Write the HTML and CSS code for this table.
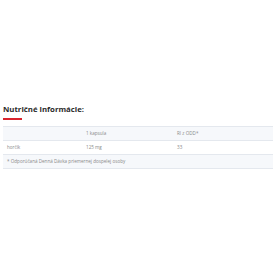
FILE: index.html
```html
<!DOCTYPE html>
<html lang="sk">
<head>
    <meta charset="UTF-8">
    <meta name="viewport" content="width=device-width, initial-scale=1.0">
    <title>Nutričné informácie</title>
    <link rel="stylesheet" href="styles.css">
</head>
<body>

<div class="nutrition">
    <h2>Nutričné informácie:</h2>
    <div class="underline"></div>

    <table class="nutrition-table">
        <thead>
            <tr>
                <th class="col-name"></th>
                <th class="col-dose">1 kapsula</th>
                <th class="col-ri">RI z ODD*</th>
            </tr>
        </thead>
        <tbody>
            <tr>
                <td>horčík</td>
                <td>125 mg</td>
                <td>33</td>
            </tr>
        </tbody>
        <tfoot>
            <tr>
                <td colspan="3">* Odporúčaná Denná Dávka priemernej dospelej osoby</td>
            </tr>
        </tfoot>
    </table>
</div>

</body>
</html>
```

FILE: styles.css
```css
/* Global styles */
body {
    margin: 0;
    padding: 0;
    background: #ffffff;
    font-family: 'Open Sans', sans-serif;
}

.nutrition {
    padding: 103px 5px 0 3px;
}

.nutrition h2 {
    margin: 0;
    font-size: 7.8px;
    font-weight: 700;
    color: #2b2b2b;
    line-height: 12px;
}

.underline {
    width: 19px;
    height: 1.5px;
    margin-top: 3px;
    background: #d9232d;
}

.nutrition-table {
    width: 270px;
    margin-top: 6px;
    border-collapse: collapse;
    font-size: 4.6px;
    color: #8a8a8a;
}

.nutrition-table th,
.nutrition-table td {
    text-align: left;
    font-weight: 400;
    height: 13px;
    padding: 0 4px;
    border-top: 1px solid #e4e8ee;
    border-bottom: 1px solid #e4e8ee;
}

.nutrition-table thead tr,
.nutrition-table tfoot tr {
    background: #f6f8fb;
}

.col-name {
    width: 71px;
}

.col-dose {
    width: 83px;
}
```
